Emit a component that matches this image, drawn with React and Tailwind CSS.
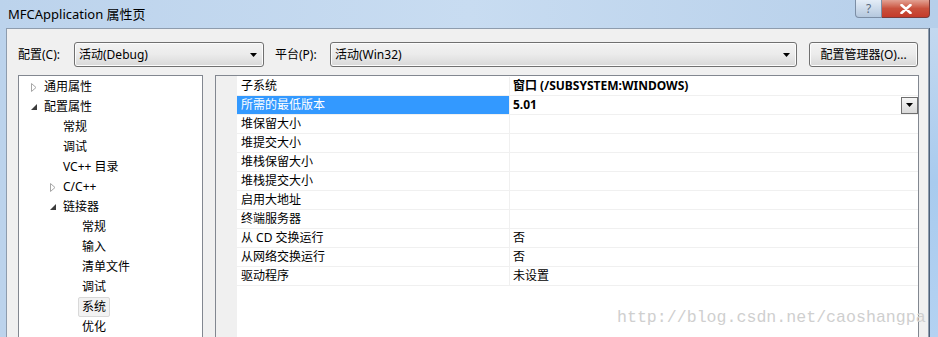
const font = "font-['Noto_Sans','Noto_Sans_CJK_SC',sans-serif]"

function Collapsed() {
    return (
        <svg width="6" height="9" viewBox="0 0 6 9" className="shrink-0">
            <path d="M0.5 0.5 L5 4.5 L0.5 8.5 Z" fill="white" stroke="#a6a6a6" />
        </svg>
    )
}

function Expanded() {
    return (
        <svg width="6" height="6" viewBox="0 0 6 6" className="shrink-0">
            <path d="M6 0 L6 6 L0 6 Z" fill="#3c3c3c" />
        </svg>
    )
}

function Arrow() {
    return (
        <svg width="7" height="4" viewBox="0 0 7 4">
            <path d="M0 0 L7 0 L3.5 4 Z" fill="#000" />
        </svg>
    )
}

const tree = [
    { label: "通用属性", level: 0, icon: "c" },
    { label: "配置属性", level: 0, icon: "e" },
    { label: "常规", level: 1 },
    { label: "调试", level: 1 },
    { label: "VC++ 目录", level: 1 },
    { label: "C/C++", level: 1, icon: "c" },
    { label: "链接器", level: 1, icon: "e" },
    { label: "常规", level: 2 },
    { label: "输入", level: 2 },
    { label: "清单文件", level: 2 },
    { label: "调试", level: 2 },
    { label: "系统", level: 2, selected: true },
    { label: "优化", level: 2 },
]

const props = [
    { name: "子系统", value: "窗口 (/SUBSYSTEM:WINDOWS)", bold: true },
    { name: "所需的最低版本", value: "5.01", bold: true, active: true },
    { name: "堆保留大小", value: "" },
    { name: "堆提交大小", value: "" },
    { name: "堆栈保留大小", value: "" },
    { name: "堆栈提交大小", value: "" },
    { name: "启用大地址", value: "" },
    { name: "终端服务器", value: "" },
    { name: "从 CD 交换运行", value: "否" },
    { name: "从网络交换运行", value: "否" },
    { name: "驱动程序", value: "未设置" },
]

function Combo({ text, width }) {
    return (
        <div className={`${width} h-[25px] border border-[#707070] rounded-[3px] bg-linear-to-b from-[#f3f3f3] via-[#ebebeb] to-[#d8d8d8] flex items-center justify-between pl-[4px] pr-[6px] shadow-[inset_0_0_0_1px_#fcfcfc]`}>
            <span className="text-[12px] text-black">{text}</span>
            <Arrow />
        </div>
    )
}

export default function App() {
    return (
        <div className={`w-[938px] h-[337px] overflow-hidden relative flex flex-col bg-linear-to-r from-[#bcd3ec] via-[#c8dcf1] to-[#b6cfea] ${font}`}>
            {/* title bar */}
            <div className="h-[28px] flex items-start shrink-0">
                <div className="pl-[8px] pt-[4px] text-[13px] text-black leading-[20px] flex-1">MFCApplication 属性页</div>
                <div className="flex h-[18px] mr-[8px]">
                    <div className="w-[27px] h-[18px] border border-[#7c8ea5] border-t-0 rounded-bl-[4px] bg-linear-to-b from-[#e4edf7] to-[#b5c8de] flex items-center justify-center text-[12px] text-[#5a6b80] leading-none">?</div>
                    <div className="w-[48px] h-[18px] border border-[#7a3b3b] border-t-0 border-l-0 rounded-br-[4px] bg-linear-to-b from-[#e2a193] via-[#c9513d] to-[#c43a2a] flex items-center justify-center">
                        <svg width="12" height="10" viewBox="0 0 12 10">
                            <path d="M1.5 1 L10.5 9 M10.5 1 L1.5 9" stroke="white" strokeWidth="2.6" strokeLinecap="round" />
                        </svg>
                    </div>
                </div>
            </div>

            <div className="flex flex-1 min-h-0">
                <div className="w-[6px] shrink-0" />
                {/* client */}
                <div className="flex-1 bg-[#f0f0f0] border-t border-l border-r border-[#8e9cad] flex flex-col pt-[13px] pl-[11px] pr-[9px]">
                    <div className="flex items-center h-[25px] text-[12px] text-black shrink-0">
                        <span className="w-[56px]">配置(C):</span>
                        <Combo text="活动(Debug)" width="w-[190px]" />
                        <span className="ml-[11px] w-[55px]">平台(P):</span>
                        <Combo text="活动(Win32)" width="w-[467px]" />
                        <div className="ml-[12px] w-[109px] h-[25px] border border-[#707070] rounded-[3px] bg-linear-to-b from-[#f3f3f3] via-[#ebebeb] to-[#d8d8d8] flex items-center justify-center shadow-[inset_0_0_0_1px_#fcfcfc]">配置管理器(O)...</div>
                    </div>

                    <div className="flex mt-[8px] flex-1 min-h-0 gap-[12px]">
                        {/* tree */}
                        <div className="w-[185px] shrink-0 bg-white border border-[#828790] border-b-0 pt-[1px]">
                            {tree.map((t, i) => (
                                <div key={i} className="h-[20px] flex items-center text-[12px] text-black" style={{ paddingLeft: 25 + t.level * 19 - 13 }}>
                                    <span className="w-[13px] flex items-center">
                                        {t.icon === "c" && <Collapsed />}
                                        {t.icon === "e" && <Expanded />}
                                    </span>
                                    {t.selected ? (
                                        <span className="-ml-[4px] px-[3px] h-[20px] leading-[18px] border border-[#d9d9d9] rounded-[2px] bg-[#f2f2f2]">{t.label}</span>
                                    ) : (
                                        <span>{t.label}</span>
                                    )}
                                </div>
                            ))}
                        </div>

                        {/* property grid */}
                        <div className="flex-1 bg-white border border-[#828790] border-b-0 flex">
                            <div className="w-[21px] bg-[#f0f0f0] shrink-0" />
                            <div className="flex-1 pt-[1px]">
                                {props.map((p, i) => (
                                    <div key={i} className="h-[19px] flex border-b border-[#f0f0f0] text-[12px]">
                                        <div className={`w-[273px] shrink-0 pl-[4px] flex items-center border-r border-[#f0f0f0] ${p.active ? "bg-[#3399ff] text-white" : "text-black"}`}>{p.name}</div>
                                        <div className={`flex-1 pl-[3px] flex items-center justify-between text-black ${p.bold ? "font-bold" : ""}`}>
                                            <span>{p.value}</span>
                                            {p.active && (
                                                <div className="w-[17px] h-[17px] border border-[#6f6f6f] bg-linear-to-b from-[#f6f6f6] to-[#d9d9d9] flex items-center justify-center">
                                                    <Arrow />
                                                </div>
                                            )}
                                        </div>
                                    </div>
                                ))}
                            </div>
                        </div>
                    </div>
                </div>
                <div className="w-[9px] shrink-0 bg-linear-to-b from-[#c3d8ef] via-[#a9cbee] to-[#b4d2f2] border-l border-[#4d6078]" />
            </div>

            <div className="absolute left-[617px] top-[306px] text-[16.6px] leading-[24px] text-[#cfcfcf] font-['Liberation_Mono',monospace]">http://blog.csdn.net/caoshangpa</div>
        </div>
    )
}
